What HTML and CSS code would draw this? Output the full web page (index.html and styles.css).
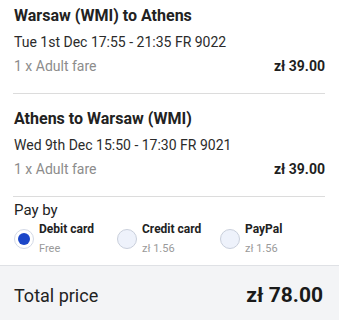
FILE: index.html
```html
<!DOCTYPE html>
<html>
<head>
<meta charset="utf-8">
<link rel="stylesheet" href="styles.css">
</head>
<body>
<div class="summary">
  <section class="segment first">
    <div class="title">Warsaw (WMI) to Athens</div>
    <div class="detail">Tue 1st Dec 17:55 - 21:35 FR 9022</div>
    <div class="fare-row"><span class="fare">1 x Adult fare</span><span class="price">zł 39.00</span></div>
  </section>
  <section class="segment">
    <div class="title">Athens to Warsaw (WMI)</div>
    <div class="detail">Wed 9th Dec 15:50 - 17:30 FR 9021</div>
    <div class="fare-row"><span class="fare">1 x Adult fare</span><span class="price">zł 39.00</span></div>
  </section>
  <section class="pay">
    <div class="pay-label">Pay by</div>
    <div class="options">
      <div class="option">
        <span class="radio checked"></span>
        <div class="opt-text"><div class="opt-name">Debit card</div><div class="opt-fee">Free</div></div>
      </div>
      <div class="option">
        <span class="radio"></span>
        <div class="opt-text"><div class="opt-name">Credit card</div><div class="opt-fee">zł 1.56</div></div>
      </div>
      <div class="option">
        <span class="radio"></span>
        <div class="opt-text"><div class="opt-name">PayPal</div><div class="opt-fee">zł 1.56</div></div>
      </div>
    </div>
  </section>
  <footer class="total">
    <span class="total-label">Total price</span>
    <span class="total-value">zł 78.00</span>
  </footer>
</div>
</body>
</html>
```
FILE: styles.css
```css
html, body {
  margin: 0;
  padding: 0;
  background: #fff;
}
body {
  font-family: Roboto, "Liberation Sans", sans-serif;
  color: #222;
  width: 339px;
  height: 321px;
  overflow: hidden;
}
.summary {
  display: flex;
  flex-direction: column;
}
.segment {
  margin: 0 14px 0 13px;
  padding: 15px 0 17px 1px;
  border-bottom: 1px solid #dcdcdc;
}
.segment.first {
  padding-top: 6px;
}
.title {
  font-size: 16px;
  font-weight: 700;
  line-height: 20px;
  color: #222;
}
.detail {
  font-size: 14px;
  line-height: 20px;
  margin-top: 6px;
  color: #2b2b2b;
}
.fare-row {
  display: flex;
  justify-content: space-between;
  align-items: baseline;
  margin-top: 4px;
  line-height: 20px;
}
.fare {
  font-size: 14px;
  color: #8c8c8c;
}
.price {
  font-size: 14px;
  font-weight: 700;
  color: #1f1f1f;
}
.pay {
  padding: 3px 14px 8px 14px;
}
.pay-label {
  font-size: 15px;
  line-height: 20px;
  color: #222;
}
.options {
  display: flex;
  margin-top: 1px;
}
.option {
  display: flex;
  align-items: flex-start;
  width: 103px;
}
.radio {
  box-sizing: border-box;
  width: 20px;
  height: 20px;
  border-radius: 50%;
  border: 1px solid #c9cfdb;
  background: #eef2fb;
  margin: 8px 5px 0 0;
  flex: none;
  position: relative;
}
.radio.checked {
  background: #fff;
  border-color: #d3d9e6;
}
.radio.checked::after {
  content: "";
  position: absolute;
  left: 3px;
  top: 3px;
  width: 12px;
  height: 12px;
  border-radius: 50%;
  background: #1b46c8;
}
.opt-name {
  font-size: 12px;
  font-weight: 700;
  line-height: 16px;
  color: #222;
}
.opt-fee {
  font-size: 11px;
  line-height: 16px;
  margin-top: 4px;
  color: #9a9a9a;
}
.total {
  display: flex;
  justify-content: space-between;
  align-items: center;
  height: 55px;
  box-sizing: border-box;
  padding: 4px 16px 0 14px;
  background: #f3f4f6;
  border-top: 1px solid #dfe1e5;
}
.total-label {
  font-size: 18px;
  color: #222;
}
.total-value {
  font-size: 21px;
  font-weight: 700;
  color: #1a1a1a;
}
```
